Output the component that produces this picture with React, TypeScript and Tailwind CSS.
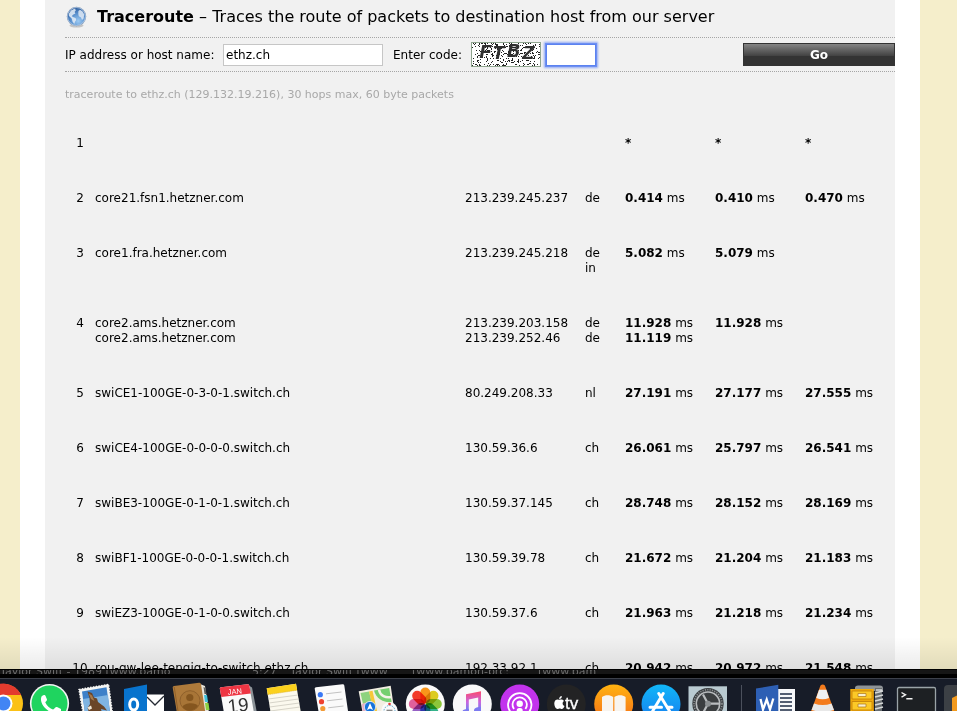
import React from "react";

type Reply = { ip?: string; host?: string; cc?: string; times: string[] };
type Hop = { n: number; replies: Reply[]; extraCc?: string };

const hops: Hop[] = [
  { n: 1, replies: [{ times: ["*", "*", "*"] }] },
  { n: 2, replies: [{ host: "core21.fsn1.hetzner.com", ip: "213.239.245.237", cc: "de", times: ["0.414", "0.410", "0.470"] }] },
  { n: 3, replies: [{ host: "core1.fra.hetzner.com", ip: "213.239.245.218", cc: "de", times: ["5.082", "5.079"] }], extraCc: "in" },
  {
    n: 4,
    replies: [
      { host: "core2.ams.hetzner.com", ip: "213.239.203.158", cc: "de", times: ["11.928", "11.928"] },
      { host: "core2.ams.hetzner.com", ip: "213.239.252.46", cc: "de", times: ["11.119"] },
    ],
  },
  { n: 5, replies: [{ host: "swiCE1-100GE-0-3-0-1.switch.ch", ip: "80.249.208.33", cc: "nl", times: ["27.191", "27.177", "27.555"] }] },
  { n: 6, replies: [{ host: "swiCE4-100GE-0-0-0-0.switch.ch", ip: "130.59.36.6", cc: "ch", times: ["26.061", "25.797", "26.541"] }] },
  { n: 7, replies: [{ host: "swiBE3-100GE-0-1-0-1.switch.ch", ip: "130.59.37.145", cc: "ch", times: ["28.748", "28.152", "28.169"] }] },
  { n: 8, replies: [{ host: "swiBF1-100GE-0-0-0-1.switch.ch", ip: "130.59.39.78", cc: "ch", times: ["21.672", "21.204", "21.183"] }] },
  { n: 9, replies: [{ host: "swiEZ3-100GE-0-1-0-0.switch.ch", ip: "130.59.37.6", cc: "ch", times: ["21.963", "21.218", "21.234"] }] },
  { n: 10, replies: [{ host: "rou-gw-lee-tengig-to-switch.ethz.ch", ip: "192.33.92.1", cc: "ch", times: ["20.942", "20.972", "21.548"] }] },
];

function Time({ value }: { value?: string }) {
  if (!value) return null;
  return (
    <div>
      <b>{value}</b>
      {value === "*" ? "" : " ms"}
    </div>
  );
}

function HopTable() {
  return (
    <table className="mt-[13px] w-full table-fixed text-left text-[12px] leading-[15px]">
      <colgroup>
        <col className="w-[30px]" />
        <col />
        <col className="w-[120px]" />
        <col className="w-[40px]" />
        <col className="w-[90px]" />
        <col className="w-[90px]" />
        <col className="w-[90px]" />
      </colgroup>
      <tbody className="align-top">
        {hops.map((hop) => (
          <tr key={hop.n}>
            <td className="py-5 text-center">{hop.n}</td>
            <td className="py-5">{hop.replies.map((r, i) => <div key={i}>{r.host}</div>)}</td>
            <td className="py-5">{hop.replies.map((r, i) => <div key={i}>{r.ip}</div>)}</td>
            <td className="py-5">
              {hop.replies.map((r, i) => <div key={i}>{r.cc}</div>)}
              {hop.extraCc && <div>{hop.extraCc}</div>}
            </td>
            {[0, 1, 2].map((c) => (
              <td key={c} className="py-5">
                {hop.replies.map((r, i) => <Time key={i} value={r.times[c]} />)}
              </td>
            ))}
          </tr>
        ))}
      </tbody>
    </table>
  );
}

function Globe() {
  return (
    <svg className="h-6 w-6" viewBox="0 0 24 24" aria-hidden="true">
      <defs>
        <radialGradient id="globe" cx="0.6" cy="0.75" r="0.7">
          <stop offset="0" stopColor="#9ccaf3" />
          <stop offset="0.6" stopColor="#5a90cd" />
          <stop offset="1" stopColor="#3767a6" />
        </radialGradient>
      </defs>
      <ellipse cx="11.5" cy="20.5" rx="7" ry="2" fill="#c4c4c4" />
      <circle cx="11.5" cy="11.5" r="9.7" fill="#6a86ab" />
      <circle cx="11.5" cy="11.5" r="9" fill="url(#globe)" stroke="#c5d8ec" strokeWidth=".7" />
      <path d="M4 8.5 L6 5.5 L9.5 3.7 L11 5 L9.6 7 L10.4 8.5 L8 9.7 L6.8 11.3 L8.5 12.3 L10.6 13 L11.2 15 L10 16.8 L9.3 19 L7.5 16.6 L6.7 13.6 L4 11Z" fill="#e3ecf6" opacity=".88" />
      <path d="M13.4 6 L15 4.7 L17.6 6.5 L19.2 9.5 L18.6 13.4 L17 15 L16 12.5 L13.8 11.3 L13.3 9Z" fill="#dfe9f4" opacity=".85" />
    </svg>
  );
}

function noisePath() {
  let seed = 73;
  const next = () => {
    seed = (seed * 1103515245 + 12345) % 2147483648;
    return seed / 2147483648;
  };
  let d = "";
  for (let i = 0; i < 340; i++) {
    const x = 1 + Math.floor(next() * 68);
    const y = 1 + Math.floor(next() * 23);
    d += `M${x} ${y}h1v1h-1z`;
  }
  return d;
}

function Captcha() {
  return (
    <svg className="h-[25px] w-[70px]" viewBox="0 0 70 25" role="img" aria-label="Code">
      <rect x=".5" y=".5" width="69" height="24" fill="#fff" stroke="#8fa58f" />
      <path d={noisePath()} fill="#222" shapeRendering="crispEdges" />
      <g fontFamily="Liberation Mono, monospace" fontWeight="700" fontStyle="italic" fontSize="21" fill="#303030">
        <text x="8" y="16">F</text>
        <text x="21" y="17">T</text>
        <text x="36" y="15">B</text>
        <text x="51" y="17">Z</text>
      </g>
    </svg>
  );
}

function Icon({ children }: { children: React.ReactNode }) {
  return (
    <svg className="h-8 w-[47px] shrink-0" viewBox="0 0 47 32" aria-hidden="true">
      {children}
    </svg>
  );
}

const petals = ["#f9951a", "#dccb1f", "#8cc63a", "#34b38a", "#4f8be0", "#9560c4", "#e0609c", "#f23c2c"];
const sans = "Liberation Sans, Arial, sans-serif";

function Dock() {
  return (
    <nav aria-label="Dock" className="flex h-8 overflow-hidden bg-[#171c28]">
      <div className="-ml-5 flex">
        <Icon>
          <circle cx="23.5" cy="24.5" r="19.5" fill="#fbc116" />
          <path d="M23.5 24.5 L6 15 A19.5 19.5 0 0 1 41.2 16 L23.5 16Z" fill="#e33b2e" />
          <path d="M6 15 L16 28 L23 44 A19.5 19.5 0 0 1 6 15Z" fill="#2da94f" />
          <circle cx="23.5" cy="24.5" r="9" fill="#fff" />
          <circle cx="23.5" cy="24.5" r="7" fill="#4285f4" />
        </Icon>
        <Icon>
          <circle cx="22.5" cy="24.5" r="19.6" fill="#f4f4f4" />
          <circle cx="22.5" cy="24.5" r="18" fill="#1fd45f" />
          <path d="M14.5 17.5 C16 15.5 18 15.5 18.8 17.4 L20 20.5 C20 22 18.5 22.6 18.3 23.5 C20 27 23 29.5 26 30.5 C27.5 30 28.5 27.5 30 28 L34 30 V34 H26 C19 32 12 24 14.5 17.5Z" fill="#fff" />
        </Icon>
        <Icon>
          <path d="M5 10.5 L34.5 5.3 L38.5 34 L9 34Z" fill="#f5f5f3" stroke="#f5f5f3" strokeWidth="1.4" strokeDasharray="1.6 1.2" />
          <path d="M8 12.5 L32.5 8.2 L36.2 34 H11Z" fill="#3d80c8" />
          <path d="M9 20 L34 16 L36 34 H11Z" fill="#7fb4e2" />
          <path d="M13.5 12.5 L18 14 L20 18.5 L23 19.5 L24 23 L30 27.5 L33 31.5 L27 30 L28 34 H15 L13.6 29 L16 25 L15.5 19Z" fill="#6a4528" />
          <path d="M14.5 14 L18 16.5 L20.5 22 L17 20Z" fill="#a47a4d" />
          <path d="M13.5 28.5 L17 26.5 L18 29.5 L15 31Z" fill="#f2e8d7" />
        </Icon>
        <Icon>
          <path d="M25 15.5 H43 V34 H25Z" fill="#fff" />
          <path d="M26 18 L34 26 L43 17" fill="none" stroke="#252a33" strokeWidth="1.3" />
          <path d="M3 10 L26 5.5 V34 H3Z" fill="#0873cd" />
          <ellipse cx="12.7" cy="25.5" rx="4" ry="5.6" fill="none" stroke="#fff" strokeWidth="3" />
        </Icon>
        <Icon>
          <path d="M32 5 L37 7 L41 34 H34Z" fill="#e9e5da" />
          <path d="M35.5 8 L37.5 9 L38.5 15 L36.5 15Z" fill="#5c5c5c" />
          <path d="M36 16 L39 16 L40 23 L37 23Z" fill="#42c1dc" />
          <path d="M37 24 L40.5 24 L41.5 31 H38Z" fill="#8bd144" />
          <path d="M4.7 8.8 Q4.5 7.3 6 7.1 L31 3.8 Q32.7 3.6 33 5.2 L37.4 34 H9Z" fill="#ae7a3b" />
          <path d="M6.2 8 L10.3 34" stroke="#916029" strokeWidth="1" />
          <circle cx="22" cy="21.7" r="10" fill="#a87537" stroke="#8f602b" strokeWidth="1" />
          <circle cx="21.8" cy="18.5" r="3.6" fill="#85561f" />
          <path d="M14.5 28 C16 23.5 28 23 30 27 C26 33 18 33 14.5 28Z" fill="#85561f" />
        </Icon>
        <Icon>
          <path d="M33 6 L37 8.5 L42 34 H36Z" fill="#8d9499" />
          <path d="M4.8 9.5 Q4.7 8.4 6 8.2 L32.5 5.3 Q34 5.2 34.3 6.7 L39 34 H9Z" fill="#fafafa" />
          <path d="M4.8 9.5 Q4.7 8.4 6 8.2 L32.5 5.3 Q34 5.2 34.3 6.7 L35.8 14.5 L6.3 18Z" fill="#ee3543" />
          <g transform="rotate(-6 21 20)" textAnchor="middle" fontFamily={sans}>
            <text x="20.5" y="15" fontSize="7.5" fill="#fff">JAN</text>
            <text x="22.5" y="33" fontSize="19" fill="#333">19</text>
          </g>
        </Icon>
        <Icon>
          <path d="M4.7 9.3 L34 4.7 L39 34 H8.7Z" fill="#fbf9ee" />
          <path d="M4.7 9.3 L34 4.7 L35.2 11.2 L5.7 15.6Z" fill="#fbd11d" />
          <path d="M5.7 15.7 L35.2 11.2" stroke="#d9a916" strokeWidth=".8" strokeDasharray="1 1" />
          <path d="M6.5 20 L36 16 M7 24 L36.5 20 M7.6 28 L37.3 24 M8.2 32 L38 28" stroke="#cdcabf" strokeWidth=".8" />
        </Icon>
        <Icon>
          <path d="M5.7 9.7 Q5.6 8.4 7 8.2 L33.5 5.2 Q35 5 35.3 6.5 L39.3 34 H9.8Z" fill="#fafafa" />
          <circle cx="11.3" cy="15.7" r="2.6" fill="#3978f5" />
          <circle cx="12.5" cy="22.7" r="2.6" fill="#ee402f" />
          <circle cx="13.8" cy="29.7" r="2.6" fill="#f29a35" />
          <path d="M17 14.8 L32.5 13 M18 21.8 L33.5 20 M19.2 28.8 L34.5 27" stroke="#c2c2c2" strokeWidth="1" />
        </Icon>
        <Icon>
          <path d="M2.7 12.3 L34.7 6.7 L38.7 34 H6.7Z" fill="#f2eee2" />
          <path d="M4.5 14 L13 12.5 L15.5 22 L7 25Z" fill="#8dd27e" />
          <path d="M13 12.4 L16.5 11.8 L21.5 34 H18Z" fill="#f5c839" />
          <path d="M18 11.5 L33.2 9 L35.6 23 C27 24 20 19 18 11.5Z" fill="#76cf70" />
          <path d="M23 10.7 C24 17 30 19 35 18" fill="none" stroke="#f6f3e9" strokeWidth="2.4" />
          <path d="M6 25 L15 22 L18 34 H7Z" fill="#e9adc2" />
          <circle cx="14" cy="28" r="5.6" fill="#1673dc" stroke="#e5eefb" strokeWidth=".8" />
          <path d="M14 24 L17 31 L14 29.5 L11 31Z" fill="#fff" />
          <circle cx="33.5" cy="31.5" r="8.2" fill="#fafafa" />
          <circle cx="33.5" cy="32" r="5.5" fill="none" stroke="#4b9ec9" strokeWidth=".9" strokeDasharray="1.5 1" />
          <circle cx="33.5" cy="25" r="1.3" fill="#e23b34" />
          <path d="M30.5 31.3 H36.5" stroke="#777" strokeWidth="1.2" />
        </Icon>
        <Icon>
          <circle cx="22.3" cy="25" r="19.5" fill="#fafafa" />
          <g className="isolate">
            {petals.map((color, i) => (
              <rect
                key={color}
                className="mix-blend-multiply"
                x="17.3"
                y="8.5"
                width="10"
                height="16"
                rx="5"
                fill={color}
                transform={`rotate(${i * 45} 22.3 25)`}
              />
            ))}
          </g>
        </Icon>
        <Icon>
          <defs>
            <linearGradient id="note" x1="0" y1="0" x2="0" y2="1">
              <stop offset="0" stopColor="#fb4a6c" />
              <stop offset="0.5" stopColor="#c965e0" />
              <stop offset="1" stopColor="#4f8df5" />
            </linearGradient>
          </defs>
          <circle cx="22.3" cy="25" r="19.5" fill="#f9f9fa" />
          <path d="M16 15.2 L31 12.3 V34 H28.2 V18.6 L18.8 20.6 V34 H16Z" fill="url(#note)" />
          <path d="M12 34 C12 31 14 30 18.8 30 V34Z M24 32 C24 29 26 28 31 28 V34 H24Z" fill="#7d7af0" />
        </Icon>
        <Icon>
          <circle cx="22.7" cy="25" r="19.5" fill="#c233ed" />
          <g fill="none" stroke="#fff" strokeWidth="1.8">
            <path d="M13.5 33 A11.7 11.7 0 1 1 32 33" />
            <path d="M17 30 A7.2 7.2 0 1 1 28.4 30" />
          </g>
          <circle cx="22.7" cy="24.7" r="3.2" fill="#fff" />
          <rect x="19.7" y="29" width="6" height="6" rx="2.5" fill="#fff" />
        </Icon>
        <Icon>
          <circle cx="22.3" cy="25" r="19.5" fill="#232324" />
          <path d="M15 21 C13.3 20 10.6 20.8 10.3 24 C10.1 27 12 30 13.5 30 C14.4 30 14.8 29.5 15.7 29.5 C16.6 29.5 17 30 17.8 30 C19 30 20.2 28 20.5 27 C18 26 18.2 22.8 20 22 C18.5 20.2 16.7 20.4 15 21Z M15.2 20.2 C15 18.5 16.3 17.2 17.8 17 C18 18.7 16.9 20 15.2 20.2Z" fill="#fff" />
          <text x="21" y="30" fontFamily={sans} fontSize="17" fill="#fff" stroke="#fff" strokeWidth=".3">tv</text>
        </Icon>
        <Icon>
          <defs>
            <linearGradient id="books" x1="0" y1="0" x2="0" y2="1">
              <stop offset="0" stopColor="#ffb310" />
              <stop offset="1" stopColor="#f66a18" />
            </linearGradient>
          </defs>
          <circle cx="22.7" cy="25" r="19.5" fill="url(#books)" />
          <path d="M22.2 18 C19 15.5 14 15.5 11 18 V34 H22.2Z M23.4 18 C26.6 15.5 31.6 15.5 34.6 18 V34 H23.4Z" fill="#f8f4ee" />
        </Icon>
        <Icon>
          <defs>
            <linearGradient id="store" x1="0" y1="0" x2="0" y2="1">
              <stop offset="0" stopColor="#11b7f8" />
              <stop offset="1" stopColor="#1779ef" />
            </linearGradient>
          </defs>
          <circle cx="23" cy="25" r="19.5" fill="url(#store)" />
          <g stroke="#fff" strokeWidth="3" strokeLinecap="round">
            <path d="M25.2 14.5 L14.7 32 M20.8 14.5 L31.5 32" />
            <path d="M12 28.3 H23.5 M29.5 28.3 H34" />
          </g>
        </Icon>
        <Icon>
          <rect x="3.5" y="7.3" width="38.5" height="30" fill="#b9cad1" />
          <circle cx="23" cy="24.7" r="15.7" fill="#3b3f42" />
          <circle cx="23" cy="24.7" r="14" fill="none" stroke="#8f9395" strokeWidth="1.6" strokeDasharray="1.1 1.3" />
          <circle cx="23" cy="24.7" r="11.7" fill="none" stroke="#b9bcbe" strokeWidth="1.6" />
          <circle cx="23" cy="24.7" r="9.8" fill="#3b3e40" />
          <path d="M23 24.7 L18 15.5 M23 24.7 H34 M23 24.7 L18 34" stroke="#b9bcbe" strokeWidth="2.2" />
          <circle cx="23" cy="24.7" r="3" fill="#8c9092" />
        </Icon>
      </div>
      <div className="mt-1.5 mr-2.5 ml-[9px] w-px shrink-0 bg-[#4b505c]" />
      <div className="flex">
        <Icon>
          <path d="M25 10 H43 V34 H25Z" fill="#f7f8fa" />
          <path d="M28 15 H40 M28 19 H40 M28 23 H40 M28 27 H40 M28 31 H40" stroke="#1e2b45" strokeWidth="1.3" />
          <path d="M4 9.5 L26.3 5.7 V34 H4Z" fill="#2d5fb4" />
          <path d="M8.5 20 L11 30.5 L14.7 20.5 L18 30.5 L21.3 19.5" fill="none" stroke="#fff" strokeWidth="2.3" />
        </Icon>
        <Icon>
          <path d="M21.5 6.5 Q23.7 4.5 25.9 6.5 L36 34 H11.4Z" fill="#f47b1c" />
          <path d="M20 10.8 H27.4 L30 19 Q23.7 21.4 17.2 19Z" fill="#f0f0f0" />
          <path d="M15 24.5 Q23.7 27.7 32.5 24.5 L35 31 Q23.7 34.5 12.6 31Z" fill="#e8e8e8" />
        </Icon>
        <Icon>
          <path d="M9 9 Q9 6.5 12 6.5 H34 Q37 6.5 37 9.5 V12 H9Z" fill="#8f9497" />
          <path d="M29 9 H36 V34 H29Z" fill="#686d70" />
          <path d="M30 11 H36 M29 14 L37 12 M29 18 L37 16 M29 22 L37 20 M29 26 L37 24 M29 30 L37 28" stroke="#d5d8d9" strokeWidth="1.6" />
          <rect x="4.3" y="10" width="23.5" height="24" fill="#f0aa0c" />
          <path d="M6 12 H26 V20 H6Z M6 22.5 H26 V31 H6Z" fill="#fcc927" stroke="#c17e08" strokeWidth=".8" />
          <path d="M12 14.5 H20 V17.5 H12Z M12 25 H20 V28 H12Z" fill="#f8efd0" stroke="#ad7715" strokeWidth=".7" />
        </Icon>
        <Icon>
          <rect x="4.5" y="8.5" width="38" height="30" rx="1.5" fill="#1d2023" stroke="#9aa3a7" strokeWidth="1.3" />
          <path d="M8.5 13.5 L12.5 15.8 L8.5 18.1 M13.3 19.7 H19.5" fill="none" stroke="#f3f3f3" strokeWidth="1.4" />
        </Icon>
        <Icon>
          <rect x="4" y="6" width="39" height="34" rx="4" fill="#3c4045" />
          <path d="M12 19 L20 15 V34 H12Z" fill="#f39a1d" />
        </Icon>
      </div>
    </nav>
  );
}

export default function App() {
  return (
    <div className="flex h-screen flex-col overflow-hidden bg-black font-['DejaVu_Sans',Verdana,sans-serif] text-black">
      <main className="relative min-h-0 flex-1 overflow-hidden bg-[#f5eecb] pr-[37px] pl-5">
        <div className="bg-white px-[25px]">
          <section className="bg-[#f1f1f1] pl-5">
            <header className="flex h-[37px] items-center gap-2 pb-1">
              <Globe />
              <h1 className="whitespace-nowrap text-[16px] leading-5">
                <b>Traceroute</b> – Traces the route of packets to destination host from our server
              </h1>
            </header>
            <form
              className="flex h-[35px] items-center border-y border-dotted border-[#a5a5a5] text-[12px]"
              onSubmit={(e) => e.preventDefault()}
            >
              <label htmlFor="host" className="w-[158px] whitespace-nowrap">
                IP address or host name:
              </label>
              <input id="host" defaultValue="ethz.ch" className="h-[22px] w-40 border border-[#c6c6c6] bg-white px-0.5 outline-none" />
              <label htmlFor="code" className="ml-2.5 w-[78px] whitespace-nowrap">
                Enter code:
              </label>
              <Captcha />
              <input
                id="code"
                className="ml-[5px] h-[22px] w-[50px] border border-[#5b82f0] bg-white px-0.5 shadow-[0_0_0_1px_#6d8ff2,0_0_2px_2px_#93abf5] outline-none"
              />
              <button
                type="submit"
                className="ml-auto h-[23px] w-[152px] border border-[#333] bg-linear-to-b from-[#858585] from-0% via-[#444] via-55% to-[#333] to-55% font-bold text-white"
              >
                Go
              </button>
            </form>
            <p className="mt-[15px] text-[11px] leading-4 text-[#a8a8a8]">
              traceroute to ethz.ch (129.132.19.216), 30 hops max, 60 byte packets
            </p>
            <HopTable />
          </section>
        </div>
        <div className="pointer-events-none absolute inset-x-0 bottom-0 h-8 bg-linear-to-b from-transparent to-black/8" />
      </main>
      <footer>
        <div className="flex h-[9px] flex-col overflow-hidden bg-black pt-px">
          <div className="flex h-1 items-center overflow-hidden whitespace-pre bg-[#161616] text-[11px] leading-3 text-[#6e6e6e]">
            <span className="w-[252px] shrink-0">Taylor Swift - 1989 [www.pamo</span>
            <span className="w-[38px] shrink-0">5:27</span>
            <span className="w-[122px] shrink-0">Taylor Swift [www</span>
            <span className="w-[126px] shrink-0">[www.pamon-prc:</span>
            <span>[www.pam</span>
          </div>
        </div>
        <div className="h-px bg-[#3d414b]" />
        <Dock />
      </footer>
    </div>
  );
}
